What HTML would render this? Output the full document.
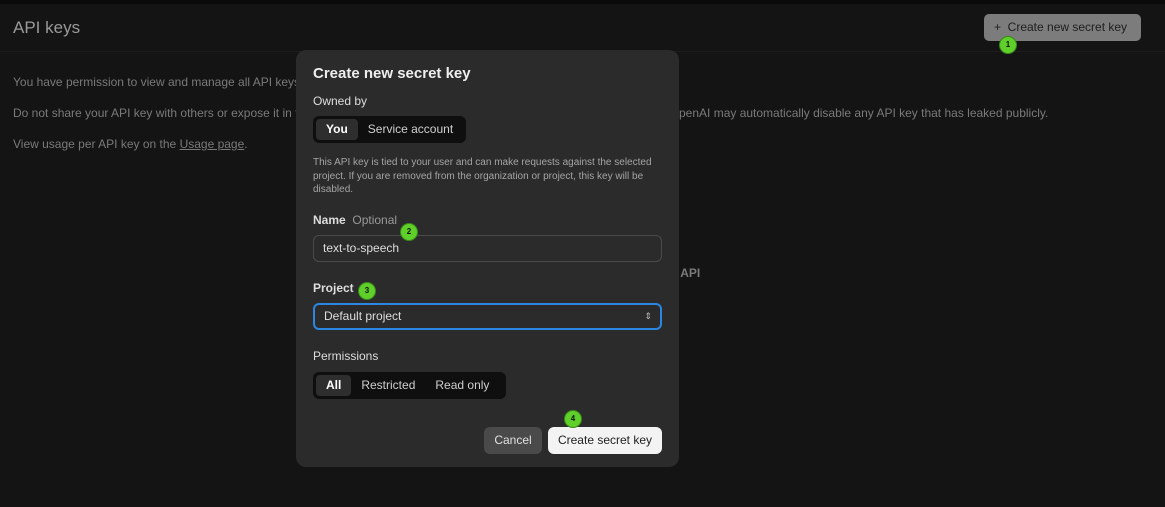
<!DOCTYPE html><html><head><style>
*{margin:0;padding:0;box-sizing:border-box}
body{width:1165px;height:507px;background:#141414;font-family:"Liberation Sans",sans-serif;position:relative;overflow:hidden;color:#8a8a8a}
.a{position:absolute}
.top{left:0;top:0;width:1165px;height:4px;background:#0a0a0a}
.hl{left:0;top:51px;width:1165px;height:1px;background:#1d1d1d}
.t{font-size:12px;color:#7a7a7a;white-space:nowrap}
.modal{left:296px;top:50px;width:383px;height:417px;background:#2b2b2b;border-radius:10px;color:#e8e8e8}
.seg{background:#0f0f0f;border-radius:6px;display:flex;padding:3px;font-size:12px;color:#cfcfcf;white-space:nowrap}
.seg span{padding:0 10px;line-height:21px;border-radius:4px}
.seg span.on{background:#2e2e2e;color:#fff;font-weight:bold}
.badge{width:18px;height:18px;border-radius:50%;background:#5fcf2a;border:1px solid #3a8a1a;font-size:8px;font-weight:bold;color:#111;text-align:center;line-height:16px}
</style></head><body>
<div class="a top"></div>
<div class="a" style="left:13px;top:18px;font-size:17px;color:#9a9a9a">API keys</div>
<div class="a hl"></div>
<div class="a" style="left:984px;top:14px;width:157px;height:27px;background:#7c7c7c;border-radius:5px;font-size:12px;color:#1e1e1e;line-height:27px;padding-left:10px;white-space:nowrap">+&nbsp;&nbsp;Create new secret key</div>
<div class="a badge" style="left:999px;top:36px">1</div>
<div class="a t" style="left:13px;top:75px">You have permission to view and manage all API keys</div>
<div class="a t" style="left:13px;top:106px">Do not share your API key with others or expose it in th</div>
<div class="a t" style="left:679px;top:106px">penAI may automatically disable any API key that has leaked publicly.</div>
<div class="a t" style="left:13px;top:137px">View usage per API key on the <u>Usage page</u>.</div>
<div class="a" style="left:674px;top:266px;font-size:12px;font-weight:bold;color:#7a7a7a">I API</div>
<div class="a modal">
<div class="a" style="left:17px;top:15px;font-size:15px;font-weight:bold;color:#eee">Create new secret key</div>
<div class="a" style="left:17px;top:44px;font-size:12px;color:#ddd">Owned by</div>
<div class="a seg" style="left:17px;top:66px;width:153px;height:27px"><span class="on">You</span><span>Service account</span></div>
<div class="a" style="left:17px;top:106px;width:355px;font-size:10px;line-height:13.6px;color:#a5a5a5">This API key is tied to your user and can make requests against the selected project. If you are removed from the organization or project, this key will be disabled.</div>
<div class="a" style="left:17px;top:163px;font-size:12px;color:#ddd"><b>Name</b>&nbsp; <span style="color:#999">Optional</span></div>
<div class="a" style="left:17px;top:185px;width:349px;height:27px;border:1px solid #4a4a4a;border-radius:6px;font-size:12px;line-height:25px;padding-left:9px;color:#ddd">text-to-speech</div>
<div class="a badge" style="left:104px;top:173px">2</div>
<div class="a" style="left:17px;top:231px;font-size:12px;font-weight:bold;color:#ddd">Project</div>
<div class="a badge" style="left:62px;top:232px">3</div>
<div class="a" style="left:17px;top:253px;width:349px;height:27px;border:2px solid #2a86e0;border-radius:6px;font-size:12px;line-height:23px;padding-left:9px;color:#ddd">Default project<span style="position:absolute;right:8px;top:0;font-size:9px;color:#bbb">⇕</span></div>
<div class="a" style="left:17px;top:299px;font-size:12px;color:#ddd">Permissions</div>
<div class="a seg" style="left:17px;top:322px;width:193px;height:27px"><span class="on">All</span><span>Restricted</span><span>Read only</span></div>
<div class="a" style="left:188px;top:377px;width:58px;height:27px;background:#4a4a4a;border-radius:6px;font-size:12px;line-height:27px;text-align:center;color:#e0e0e0">Cancel</div>
<div class="a" style="left:252px;top:377px;width:114px;height:27px;background:#f3f3f3;border-radius:6px;font-size:12px;line-height:27px;text-align:center;color:#222">Create secret key</div>
<div class="a badge" style="left:268px;top:360px">4</div>
</div>
</body></html>
